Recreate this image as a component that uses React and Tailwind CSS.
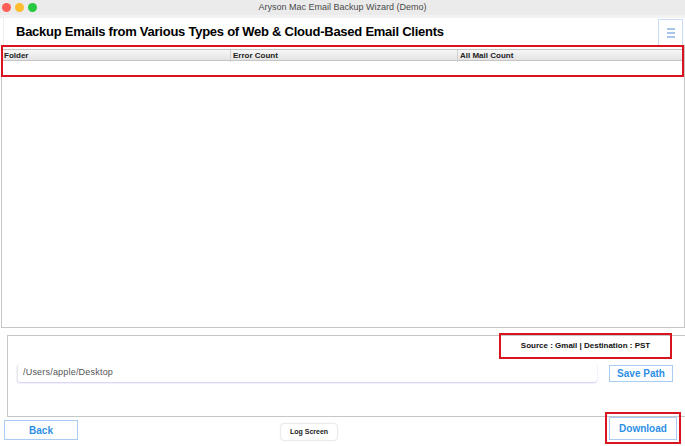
export default function App() {
  const font = { fontFamily: '"Liberation Sans", Arial, sans-serif' };
  return (
    <div className="w-[685px] h-[446px] bg-white flex flex-col overflow-hidden" style={font}>
      {/* Title bar */}
      <div className="h-[15px] bg-[#ebebeb] relative flex items-center justify-center shrink-0">
        <div className="absolute left-[2px] top-[3px] flex gap-[4px]">
          <span className="w-[9px] h-[9px] rounded-full bg-[#fe5f57]" />
          <span className="w-[9px] h-[9px] rounded-full bg-[#febc2e]" />
          <span className="w-[9px] h-[9px] rounded-full bg-[#28c840]" />
        </div>
        <span className="text-[9px] text-[#4a4a4a]">Aryson Mac Email Backup Wizard (Demo)</span>
      </div>
      <div className="h-[3px] bg-[#f2f2f2] shrink-0" />

      {/* Header */}
      <div className="h-[27px] flex items-center pl-[3px] pr-[2px] shrink-0">
        <div className="flex-1 h-full flex items-center border-l border-[#eeeeee] pl-[12px]">
          <h1 className="text-[13px] font-bold text-black tracking-[-0.25px]">
            Backup Emails from Various Types of Web &amp; Cloud-Based Email Clients
          </h1>
        </div>
        <div className="w-[25px] h-[27px] mt-[2px] border border-[#c9dcf5] flex flex-col items-center justify-center gap-[2px]">
          <span className="w-[8px] h-[2px] bg-[#a8c6ec]" />
          <span className="w-[8px] h-[2px] bg-[#a8c6ec]" />
          <span className="w-[8px] h-[2px] bg-[#a8c6ec]" />
        </div>
      </div>

      {/* Table panel */}
      <div className="h-[283px] shrink-0 ml-[1px] border-l border-r border-b border-[#c6c6c6] flex flex-col">
        <div className="-ml-[1px] h-[32px] border-2 border-[#d7141f] pt-[2px]">
          <div className="h-[12px] grid grid-cols-[228px_227px_1fr] bg-gradient-to-b from-[#f7f7f7] to-[#e4e4e4] border-t border-b border-[#c4c4c4] text-[8px] font-bold text-[#222]">
            <div className="pl-[1px] flex items-center border-r border-[#d0d0d0]">Folder</div>
            <div className="pl-[2px] flex items-center border-r border-[#d0d0d0]">Error Count</div>
            <div className="pl-[2px] flex items-center">All Mail Count</div>
          </div>
        </div>
      </div>

      {/* Settings panel */}
      <div className="mt-[7px] ml-[7px] h-[82px] shrink-0 border-l border-t border-b border-[#c6c6c6] flex flex-col">
        <div className="flex justify-end pr-[13px] -mt-[3px]">
          <div className="w-[173px] h-[26px] border-2 border-[#d7141f] flex items-center justify-center text-[8px] font-bold text-[#111]">
            Source : Gmail | Destination : PST
          </div>
        </div>
        <div className="flex items-center mt-[5px] pl-[9px]">
          <div className="w-[580px] h-[18px] rounded-[3px] bg-white shadow-[0_1px_2px_rgba(120,100,220,0.35)] border-l border-[#e6e6e6] flex items-center pl-[5px] text-[9px] tracking-[0.2px] text-[#555]">
            /Users/apple/Desktop
          </div>
          <button className="ml-[12px] w-[64px] h-[17px] border border-[#a9cdf2] bg-white text-[10px] font-bold text-[#2e8fe6] flex items-center justify-center">
            Save Path
          </button>
        </div>
      </div>

      {/* Bottom buttons */}
      <div className="relative flex-1 flex items-start">
        <button className="mt-[3px] ml-[4px] w-[74px] h-[20px] border border-[#a9cdf2] bg-white text-[10px] font-bold text-[#2e8fe6] flex items-center justify-center">
          Back
        </button>
        <button className="mt-[7px] ml-[203px] w-[56px] h-[16px] rounded-[3px] bg-white shadow-[0_0_2px_rgba(0,0,0,0.3)] text-[7px] font-bold text-[#222] flex items-center justify-center">
          Log Screen
        </button>
        <div className="ml-auto mr-[4px] -mt-[5px] w-[76px] h-[32px] border-2 border-[#d7141f] flex items-end justify-center pb-[2px]">
          <button className="w-[68px] h-[23px] border border-[#a9cdf2] bg-white text-[10px] font-bold text-[#2e8fe6] flex items-center justify-center">
            Download
          </button>
        </div>
      </div>
    </div>
  );
}
